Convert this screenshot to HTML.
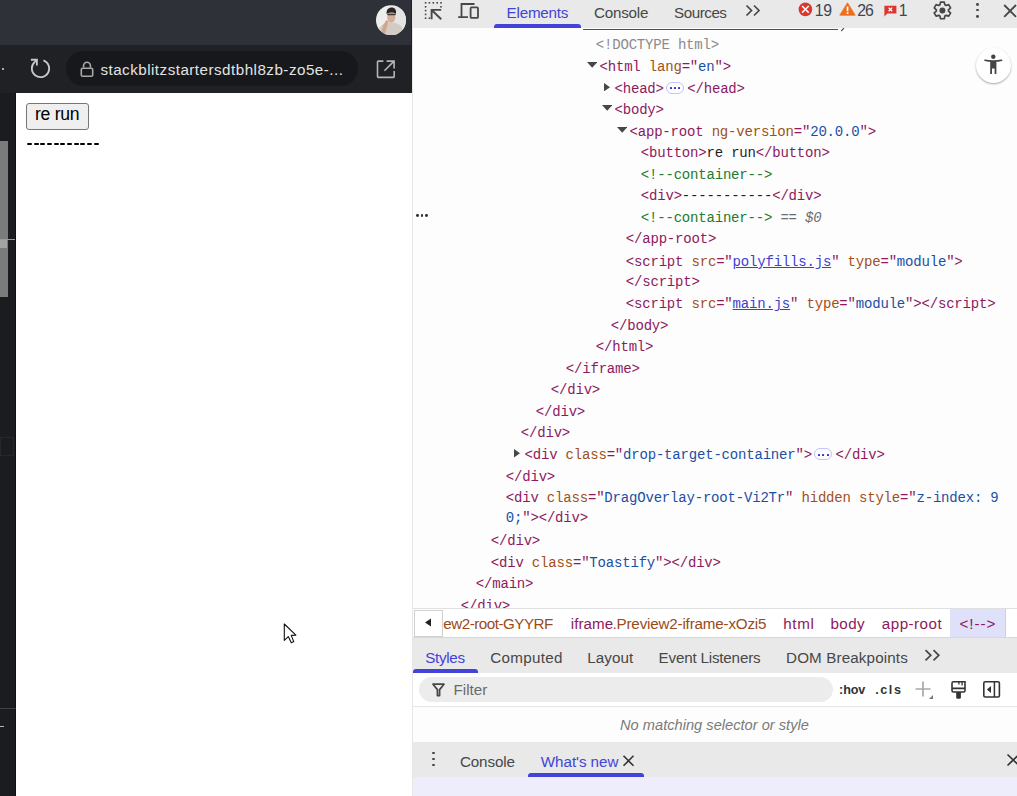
<!DOCTYPE html><html><head><meta charset="utf-8"><style>
html,body{margin:0;padding:0;width:1017px;height:796px;overflow:hidden;background:#fff;}
body{position:relative;font-family:"Liberation Sans", sans-serif;}
.r{position:absolute;}
.t{position:absolute;white-space:pre;}
.m{position:absolute;white-space:pre;font-family:"Liberation Mono", monospace;font-size:14px;line-height:14px;letter-spacing:-0.19px;}
.bd{display:inline-block;position:relative;width:18px;height:12px;margin:0 3.5px 0 2px;vertical-align:-1px;border:1px solid #c4c4f6;border-radius:6px;box-sizing:border-box;}
.bd i{position:absolute;top:4.6px;width:2px;height:2px;background:#3030d8;border-radius:0.5px;}
.bd i:nth-child(1){left:3.3px}.bd i:nth-child(2){left:7.5px}.bd i:nth-child(3){left:11.7px}
</style></head><body>
<div class="r" style="left:0px;top:0px;width:412px;height:45px;background:#2e3138;"></div>
<div class="r" style="left:0px;top:45px;width:412px;height:48px;background:#1f2125;"></div>
<div class="r" style="left:0px;top:93px;width:16px;height:703px;background:#1b1c20;"></div>
<div class="r" style="left:15px;top:93px;width:1px;height:703px;background:#0f1014;"></div>
<div class="r" style="left:16px;top:93px;width:396px;height:703px;background:#ffffff;"></div>
<div class="r" style="left:66.2px;top:51.1px;width:291.4px;height:34.7px;background:#17181b;border-radius:17.35px;"></div>
<div class="r" style="left:2.2px;top:67.7px;width:2px;height:2px;background:#d8d8d8;border-radius:1px;"></div>
<svg class="r" style="left:26px;top:54px" width="30" height="30" viewBox="0 0 30 30"><path d="M17.48 6.32 A8.7 8.7 0 1 1 8.6 8.1 L10.9 5.8" fill="none" stroke="#c8c8c8" stroke-width="1.8"/><path d="M4.9 5.75 H10.9 V11.5" fill="none" stroke="#c8c8c8" stroke-width="1.8"/></svg>
<svg class="r" style="left:79px;top:60px" width="16" height="18" viewBox="0 0 16 18"><path d="M4.6 7.6 V5.6 A3.4 3.4 0 0 1 11.4 5.6 V7.6" fill="none" stroke="#a9a9a9" stroke-width="1.6"/><rect x="2.3" y="8.2" width="11.4" height="8" rx="1.3" fill="none" stroke="#a9a9a9" stroke-width="1.6"/></svg>
<div class="t" style="left:100.42px;top:61.83px;font-size:15.2px;line-height:15.2px;color:#e3e3e3;letter-spacing:0.478px;">stackblitzstartersdtbhl8zb-zo5e-...</div>
<svg class="r" style="left:375px;top:59px" width="22" height="21" viewBox="0 0 22 21"><path d="M8.4 2.1 H3.3 Q2.5 2.1 2.5 2.9 V17.6 Q2.5 18.4 3.3 18.4 H18.4 Q19.2 18.4 19.2 17.6 V12" fill="none" stroke="#b4b4b4" stroke-width="1.6"/><path d="M11.6 2.1 H19.1 V9.6 M18.8 2.4 L9.4 11.8" fill="none" stroke="#b4b4b4" stroke-width="1.6"/></svg>
<svg class="r" style="left:375.8px;top:4.6px" width="30" height="30" viewBox="0 0 30 30"><defs><clipPath id="ac"><circle cx="15" cy="15.2" r="15"/></clipPath></defs>
<g clip-path="url(#ac)"><rect width="30" height="30" fill="#eeeeee"/><rect x="18" width="12" height="30" fill="#e4e4e4"/>
<path d="M1 31 C2 22 6 17.5 15 17.5 C23 17.5 27 21 28.5 31 Z" fill="#d4cbc4"/>
<ellipse cx="15.3" cy="12.2" rx="4" ry="5.6" fill="#d3b09c"/>
<path d="M10.6 9 C10.2 4.4 12.6 2.4 15.6 2.4 C19 2.4 20.6 4.8 20 9 C19 7 12.5 6.8 10.6 9 Z" fill="#2e2420"/>
<rect x="11.2" y="8.8" width="8.6" height="1.5" rx="0.7" fill="#3a3a3a"/>
<path d="M5.5 28 C6 22 8 18.5 10.5 15 L12.6 16 C11.6 20 10 25 9 29 Z" fill="#d2a68a"/>
</g></svg>
<div class="r" style="left:0px;top:141px;width:8px;height:156.4px;background:#7b7b7b;"></div>
<div class="r" style="left:0px;top:239px;width:15px;height:1px;background:#9a9a9a;"></div>
<div class="r" style="left:0px;top:240px;width:7px;height:8px;background:#a3a3a3;"></div>
<div class="r" style="left:0px;top:437px;width:14px;height:19px;background:transparent;border:1px solid #24272d;box-sizing:border-box;"></div>
<div class="r" style="left:0px;top:708px;width:15.5px;height:1.2px;background:#3d4048;"></div>
<div class="r" style="left:0px;top:725.6px;width:3.8px;height:1.6px;background:#b8b8c8;"></div>
<div class="r" style="left:26.2px;top:103px;width:62.5px;height:26.8px;background:#efefef;border:1px solid #767676;border-radius:3px;box-sizing:border-box;"></div>
<div class="t" style="left:35.06px;top:106.30px;font-size:17.6px;line-height:17.6px;color:#000;letter-spacing:-0.287px;">re run</div>
<div class="r" style="left:26.9px;top:142.7px;width:5.0px;height:1.9px;background:#000;border-radius:1px;"></div>
<div class="r" style="left:33.57px;top:142.7px;width:5.0px;height:1.9px;background:#000;border-radius:1px;"></div>
<div class="r" style="left:40.24px;top:142.7px;width:5.0px;height:1.9px;background:#000;border-radius:1px;"></div>
<div class="r" style="left:46.91px;top:142.7px;width:5.0px;height:1.9px;background:#000;border-radius:1px;"></div>
<div class="r" style="left:53.58px;top:142.7px;width:5.0px;height:1.9px;background:#000;border-radius:1px;"></div>
<div class="r" style="left:60.25px;top:142.7px;width:5.0px;height:1.9px;background:#000;border-radius:1px;"></div>
<div class="r" style="left:66.92px;top:142.7px;width:5.0px;height:1.9px;background:#000;border-radius:1px;"></div>
<div class="r" style="left:73.59px;top:142.7px;width:5.0px;height:1.9px;background:#000;border-radius:1px;"></div>
<div class="r" style="left:80.26px;top:142.7px;width:5.0px;height:1.9px;background:#000;border-radius:1px;"></div>
<div class="r" style="left:86.93px;top:142.7px;width:5.0px;height:1.9px;background:#000;border-radius:1px;"></div>
<div class="r" style="left:93.6px;top:142.7px;width:5.0px;height:1.9px;background:#000;border-radius:1px;"></div>
<svg class="r" style="left:280px;top:620px" width="22" height="26" viewBox="0 0 22 26"><path d="M4.3 4 L4.3 20.4 L8.3 16.6 L11.3 22.7 L13.8 21.6 L11.2 15.4 L15.9 15.1 Z" fill="#fff" stroke="#111" stroke-width="1.1" stroke-linejoin="round"/></svg>
<div class="r" style="left:411px;top:0px;width:1px;height:93px;background:#1e2026;"></div>
<div class="r" style="left:412px;top:0px;width:605px;height:796px;background:#fdfdfd;"></div>
<div class="r" style="left:412px;top:0px;width:1px;height:796px;background:#e6e6e6;"></div>
<div class="r" style="left:413px;top:0px;width:604px;height:27.7px;background:#e9e9e9;"></div>
<svg class="r" style="left:423px;top:1px" width="22" height="20" viewBox="0 0 22 20"><g fill="#474747"><rect x="1.8" y="1" width="1.6" height="1.6"/><rect x="5.6" y="1" width="1.6" height="1.6"/><rect x="9.5" y="1" width="1.6" height="1.6"/><rect x="13.4" y="1" width="1.6" height="1.6"/><rect x="17.2" y="1" width="1.6" height="1.6"/><rect x="1.8" y="5" width="1.6" height="1.6"/><rect x="1.8" y="8.8" width="1.6" height="1.6"/><rect x="1.8" y="12.6" width="1.6" height="1.6"/><rect x="1.8" y="16.4" width="1.6" height="1.6"/><rect x="17.2" y="5" width="1.6" height="1.6"/><rect x="5.6" y="16.4" width="1.6" height="1.6"/></g><path d="M8.6 18.2 V8.9 H18.2 M9.2 9.5 L18.2 18.2" fill="none" stroke="#474747" stroke-width="1.9"/></svg>
<svg class="r" style="left:457px;top:2px" width="24" height="18" viewBox="0 0 24 18"><path d="M4.5 14.8 V2 H17.5 M1.2 15.2 H11" fill="none" stroke="#474747" stroke-width="1.8"/><rect x="13.6" y="5.4" width="7.4" height="10.5" rx="1" fill="none" stroke="#474747" stroke-width="1.8"/></svg>
<div class="t" style="left:506.58px;top:5.23px;font-size:15.2px;line-height:15.2px;color:#4343d8;letter-spacing:-0.205px;">Elements</div>
<div class="r" style="left:494.2px;top:24px;width:87.3px;height:3.7px;background:#4343d8;border-radius:3px 3px 0 0;"></div>
<div class="t" style="left:593.94px;top:5.23px;font-size:15.2px;line-height:15.2px;color:#474747;letter-spacing:-0.219px;">Console</div>
<div class="t" style="left:674.12px;top:5.23px;font-size:15.2px;line-height:15.2px;color:#474747;letter-spacing:-0.478px;">Sources</div>
<svg class="r" style="left:745px;top:4px" width="17" height="13" viewBox="0 0 17 13"><path d="M1.5 1.5 L6.5 6.5 L1.5 11.5 M9 1.5 L14 6.5 L9 11.5" fill="none" stroke="#474747" stroke-width="1.7"/></svg>
<svg class="r" style="left:798px;top:2px" width="15" height="15" viewBox="0 0 15 15"><circle cx="7.4" cy="7.35" r="6.8" fill="#dc362e"/><path d="M4.1 4.05 L10.7 10.65 M10.7 4.05 L4.1 10.65" stroke="#fff" stroke-width="1.5"/></svg>
<div class="t" style="left:814.82px;top:2.83px;font-size:15.8px;line-height:15.8px;color:#3f4655;letter-spacing:-0.342px;">19</div>
<svg class="r" style="left:839px;top:2.4px" width="17" height="14" viewBox="0 0 17 14"><path d="M8.5 0.8 L16.2 13.2 H0.8 Z" fill="#ed6f1e" stroke="#ed6f1e" stroke-width="0.8" stroke-linejoin="round"/><rect x="7.7" y="4.6" width="1.7" height="4.6" fill="#fff"/><rect x="7.7" y="10.2" width="1.7" height="1.7" fill="#fff"/></svg>
<div class="t" style="left:857.21px;top:2.83px;font-size:15.8px;line-height:15.8px;color:#3f4655;letter-spacing:-0.916px;">26</div>
<svg class="r" style="left:884px;top:5px" width="13" height="12" viewBox="0 0 13 12"><path d="M0.4 0.8 H12.4 V8.6 H3.4 L0.4 11.4 Z" fill="#dc362e"/><path d="M4.6 2.6 L8.2 6.2 M8.2 2.6 L4.6 6.2" stroke="#fff" stroke-width="1.3"/></svg>
<div class="t" style="left:898.82px;top:2.83px;font-size:15.8px;line-height:15.8px;color:#3f4655;">1</div>
<svg class="r" style="left:932px;top:0px" width="21" height="21" viewBox="0 0 21 21"><path d="M7.92 4.83 L8.55 2.05 L12.25 2.05 L12.88 4.83 L13.99 5.46 L16.70 4.62 L18.55 7.83 L16.47 9.76 L16.47 11.04 L18.55 12.97 L16.70 16.18 L13.99 15.34 L12.88 15.97 L12.25 18.75 L8.55 18.75 L7.92 15.97 L6.81 15.34 L4.10 16.18 L2.25 12.97 L4.33 11.04 L4.33 9.76 L2.25 7.83 L4.10 4.62 L6.81 5.46 Z" fill="none" stroke="#474747" stroke-width="1.7" stroke-linejoin="round"/><circle cx="10.4" cy="10.4" r="3" fill="#474747"/></svg>
<div class="r" style="left:976.2px;top:2.9000000000000004px;width:2.8px;height:2.8px;background:#474747;border-radius:50%;"></div>
<div class="r" style="left:976.2px;top:8.5px;width:2.8px;height:2.8px;background:#474747;border-radius:50%;"></div>
<div class="r" style="left:976.2px;top:15.0px;width:2.8px;height:2.8px;background:#474747;border-radius:50%;"></div>
<svg class="r" style="left:1003px;top:4px" width="14" height="14" viewBox="0 0 14 14"><path d="M1.2 1 L13 12.8 M13 1 L1.2 12.8" stroke="#474747" stroke-width="1.8"/></svg>
<div class="r" style="left:583px;top:28.5px;width:255.3px;height:1.2px;background:#4040d0;"></div>
<svg class="r" style="left:840px;top:27.5px" width="5" height="4" viewBox="0 0 5 4"><path d="M4 0 L1.2 3" stroke="#555" stroke-width="1.1"/></svg>
<div class="r" style="left:413px;top:28px;width:604px;height:580px;overflow:hidden;">
<div class="m" style="left:182.80px;top:10.47px;"><span style="color:#8a8a8a">&lt;!DOCTYPE html&gt;</span></div>
<div class="m" style="left:186.50px;top:32.02px;"><span style="color:#8c1a5d">&lt;html </span><span style="color:#a0501a">lang</span><span style="color:#8c1a5d">="</span><span style="color:#1a4fa6">en</span><span style="color:#8c1a5d">"&gt;</span></div>
<svg class="r" style="left:173.70px;top:34.15px" width="10.4" height="5.8" viewBox="0 0 10.4 5.8"><path d="M0 0 H10.4 L5.2 5.8 Z" fill="#474747"/></svg>
<div class="m" style="left:201.50px;top:53.57px;"><span style="color:#8c1a5d">&lt;head&gt;</span><span class="bd"><i></i><i></i><i></i></span><span style="color:#8c1a5d">&lt;/head&gt;</span></div>
<svg class="r" style="left:190.70px;top:55.00px" width="6" height="8.4" viewBox="0 0 6 8.4"><path d="M0 0 V8.4 L6 4.2 Z" fill="#474747"/></svg>
<div class="m" style="left:201.50px;top:75.12px;"><span style="color:#8c1a5d">&lt;body&gt;</span></div>
<svg class="r" style="left:188.70px;top:77.25px" width="10.4" height="5.8" viewBox="0 0 10.4 5.8"><path d="M0 0 H10.4 L5.2 5.8 Z" fill="#474747"/></svg>
<div class="m" style="left:216.50px;top:96.67px;"><span style="color:#8c1a5d">&lt;app-root </span><span style="color:#a0501a">ng-version</span><span style="color:#8c1a5d">="</span><span style="color:#1a4fa6">20.0.0</span><span style="color:#8c1a5d">"&gt;</span></div>
<svg class="r" style="left:203.70px;top:98.80px" width="10.4" height="5.8" viewBox="0 0 10.4 5.8"><path d="M0 0 H10.4 L5.2 5.8 Z" fill="#474747"/></svg>
<div class="m" style="left:227.80px;top:118.22px;"><span style="color:#8c1a5d">&lt;button&gt;</span><span style="color:#1f1f1f">re run</span><span style="color:#8c1a5d">&lt;/button&gt;</span></div>
<div class="m" style="left:227.80px;top:139.77px;"><span style="color:#237a2e">&lt;!--container--&gt;</span></div>
<div class="m" style="left:227.80px;top:161.32px;"><span style="color:#8c1a5d">&lt;div&gt;</span><span style="color:#1f1f1f">-----------</span><span style="color:#8c1a5d">&lt;/div&gt;</span></div>
<div class="m" style="left:227.80px;top:182.87px;"><span style="color:#237a2e">&lt;!--container--&gt;</span><span style="color:#6e6e6e"> == </span><span style="color:#6e6e6e;font-style:italic;">$0</span></div>
<div class="m" style="left:212.80px;top:204.42px;"><span style="color:#8c1a5d">&lt;/app-root&gt;</span></div>
<div class="m" style="left:212.80px;top:226.97px;"><span style="color:#8c1a5d">&lt;script </span><span style="color:#a0501a">src</span><span style="color:#8c1a5d">="</span><span style="color:#4040d0;text-decoration:underline;">polyfills.js</span><span style="color:#8c1a5d">" </span><span style="color:#a0501a">type</span><span style="color:#8c1a5d">="</span><span style="color:#1a4fa6">module</span><span style="color:#8c1a5d">"&gt;</span></div>
<div class="m" style="left:212.80px;top:246.72px;"><span style="color:#8c1a5d">&lt;/script&gt;</span></div>
<div class="m" style="left:212.80px;top:269.07px;"><span style="color:#8c1a5d">&lt;script </span><span style="color:#a0501a">src</span><span style="color:#8c1a5d">="</span><span style="color:#4040d0;text-decoration:underline;">main.js</span><span style="color:#8c1a5d">" </span><span style="color:#a0501a">type</span><span style="color:#8c1a5d">="</span><span style="color:#1a4fa6">module</span><span style="color:#8c1a5d">"&gt;</span><span style="color:#8c1a5d">&lt;/script&gt;</span></div>
<div class="m" style="left:197.80px;top:290.62px;"><span style="color:#8c1a5d">&lt;/body&gt;</span></div>
<div class="m" style="left:182.80px;top:312.17px;"><span style="color:#8c1a5d">&lt;/html&gt;</span></div>
<div class="m" style="left:152.80px;top:333.72px;"><span style="color:#8c1a5d">&lt;/iframe&gt;</span></div>
<div class="m" style="left:137.80px;top:355.27px;"><span style="color:#8c1a5d">&lt;/div&gt;</span></div>
<div class="m" style="left:122.80px;top:376.82px;"><span style="color:#8c1a5d">&lt;/div&gt;</span></div>
<div class="m" style="left:107.80px;top:398.37px;"><span style="color:#8c1a5d">&lt;/div&gt;</span></div>
<div class="m" style="left:111.50px;top:419.92px;"><span style="color:#8c1a5d">&lt;div </span><span style="color:#a0501a">class</span><span style="color:#8c1a5d">="</span><span style="color:#1a4fa6">drop-target-container</span><span style="color:#8c1a5d">"&gt;</span><span class="bd"><i></i><i></i><i></i></span><span style="color:#8c1a5d">&lt;/div&gt;</span></div>
<svg class="r" style="left:100.70px;top:421.35px" width="6" height="8.4" viewBox="0 0 6 8.4"><path d="M0 0 V8.4 L6 4.2 Z" fill="#474747"/></svg>
<div class="m" style="left:92.80px;top:442.27px;"><span style="color:#8c1a5d">&lt;/div&gt;</span></div>
<div class="m" style="left:92.80px;top:463.02px;"><span style="color:#8c1a5d">&lt;div </span><span style="color:#a0501a">class</span><span style="color:#8c1a5d">="</span><span style="color:#1a4fa6">DragOverlay-root-Vi2Tr</span><span style="color:#8c1a5d">" </span><span style="color:#a0501a">hidden</span><span style="color:#8c1a5d"> </span><span style="color:#a0501a">style</span><span style="color:#8c1a5d">="</span><span style="color:#1a4fa6">z-index: 9</span></div>
<div class="m" style="left:92.80px;top:483.37px;"><span style="color:#1a4fa6">0;</span><span style="color:#8c1a5d">"&gt;</span><span style="color:#8c1a5d">&lt;/div&gt;</span></div>
<div class="m" style="left:77.80px;top:506.12px;"><span style="color:#8c1a5d">&lt;/div&gt;</span></div>
<div class="m" style="left:77.80px;top:527.67px;"><span style="color:#8c1a5d">&lt;div </span><span style="color:#a0501a">class</span><span style="color:#8c1a5d">="</span><span style="color:#1a4fa6">Toastify</span><span style="color:#8c1a5d">"&gt;</span><span style="color:#8c1a5d">&lt;/div&gt;</span></div>
<div class="m" style="left:62.80px;top:549.22px;"><span style="color:#8c1a5d">&lt;/main&gt;</span></div>
<div class="m" style="left:47.80px;top:570.77px;"><span style="color:#8c1a5d">&lt;/div&gt;</span></div>
</div>
<div class="r" style="left:416.0px;top:214.4px;width:2.8px;height:2.8px;background:#303030;border-radius:50%;"></div>
<div class="r" style="left:420.5px;top:214.4px;width:2.8px;height:2.8px;background:#303030;border-radius:50%;"></div>
<div class="r" style="left:425.1px;top:214.4px;width:2.8px;height:2.8px;background:#303030;border-radius:50%;"></div>
<div class="r" style="left:975.7px;top:48.3px;width:35.2px;height:35.2px;border-radius:50%;background:#fff;box-shadow:0 1px 2px rgba(0,0,0,0.35);"></div>
<svg class="r" style="left:983px;top:53px" width="22" height="24" viewBox="0 0 22 24"><circle cx="10.3" cy="3.7" r="2.2" fill="#444"/><path d="M2 7.2 C6 8.3 14.6 8.3 18.6 7.2" stroke="#444" stroke-width="1.6" fill="none" stroke-linecap="round"/><path d="M7.2 8 H13.4 V20.9 H11.6 V15.5 H9 V20.9 H7.2 Z" fill="#444"/></svg>
<div class="r" style="left:413px;top:608px;width:604px;height:30px;background:#ffffff;"></div>
<div class="r" style="left:413px;top:607.8px;width:604px;height:1px;background:#e0e0e0;"></div>
<div class="r" style="left:413px;top:637.3px;width:604px;height:1px;background:#d8d8d8;"></div>
<div class="r" style="left:413.5px;top:610px;width:29px;height:27px;border:1px solid #d0d0d0;box-sizing:border-box;background:#fff;"></div>
<svg class="r" style="left:424px;top:618px" width="8" height="9" viewBox="0 0 8 9"><path d="M7 0.5 V8.5 L1 4.5 Z" fill="#222"/></svg>
<div class="t" style="left:443.29px;top:616.33px;font-size:15.2px;line-height:15.2px;color:#9a4a18;letter-spacing:-0.490px;">ew2-root-GYYRF</div>
<div class="t" style="left:570.81px;top:616.33px;font-size:15.2px;line-height:15.2px;color:#8c1a5d;letter-spacing:0.023px;">iframe</div>
<div class="t" style="left:612.53px;top:616.33px;font-size:15.2px;line-height:15.2px;color:#9a4a18;letter-spacing:-0.183px;">.Preview2-iframe-xOzi5</div>
<div class="t" style="left:783.14px;top:616.33px;font-size:15.2px;line-height:15.2px;color:#8c1a5d;letter-spacing:0.667px;">html</div>
<div class="t" style="left:830.51px;top:616.33px;font-size:15.2px;line-height:15.2px;color:#8c1a5d;letter-spacing:0.368px;">body</div>
<div class="t" style="left:881.79px;top:616.33px;font-size:15.2px;line-height:15.2px;color:#8c1a5d;letter-spacing:0.477px;">app-root</div>
<div class="r" style="left:950px;top:608.7px;width:55px;height:28.7px;background:#dfe0fa;"></div>
<div class="t" style="left:959.54px;top:616.33px;font-size:15.2px;line-height:15.2px;color:#8c1a5d;letter-spacing:0.918px;">&lt;!--&gt;</div>
<div class="r" style="left:1005px;top:608.7px;width:1px;height:28.7px;background:#d0d0d0;"></div>
<div class="r" style="left:413px;top:638px;width:604px;height:34.8px;background:#e9e9e9;"></div>
<div class="t" style="left:425.22px;top:650.13px;font-size:15.2px;line-height:15.2px;color:#4343d8;letter-spacing:-0.321px;">Styles</div>
<div class="r" style="left:413px;top:669px;width:64.8px;height:3.8px;background:#4343d8;border-radius:3px 3px 0 0;"></div>
<div class="t" style="left:490.24px;top:650.13px;font-size:15.2px;line-height:15.2px;color:#474747;letter-spacing:0.303px;">Computed</div>
<div class="t" style="left:587.18px;top:650.13px;font-size:15.2px;line-height:15.2px;color:#474747;letter-spacing:0.098px;">Layout</div>
<div class="t" style="left:658.58px;top:650.13px;font-size:15.2px;line-height:15.2px;color:#474747;letter-spacing:-0.190px;">Event Listeners</div>
<div class="t" style="left:786.08px;top:650.13px;font-size:15.2px;line-height:15.2px;color:#474747;letter-spacing:0.130px;">DOM Breakpoints</div>
<svg class="r" style="left:924px;top:649px" width="18" height="14" viewBox="0 0 18 14"><path d="M1.5 1.2 L6.8 6.3 L1.5 11.4 M9.5 1.2 L14.8 6.3 L9.5 11.4" fill="none" stroke="#474747" stroke-width="1.7"/></svg>
<div class="r" style="left:413px;top:672.8px;width:604px;height:33px;background:#ffffff;"></div>
<div class="r" style="left:413px;top:705.5px;width:604px;height:1px;background:#e4e4e4;"></div>
<div class="r" style="left:418.5px;top:677.2px;width:414px;height:25.1px;background:#ececec;border-radius:12.5px;"></div>
<svg class="r" style="left:432px;top:683px" width="13" height="14" viewBox="0 0 13 14"><path d="M1 1.2 H12 L7.6 6.6 V12.6 H5.4 V6.6 Z" fill="none" stroke="#474747" stroke-width="1.7" stroke-linejoin="round"/></svg>
<div class="t" style="left:453.58px;top:681.93px;font-size:15.2px;line-height:15.2px;color:#6a6a6a;letter-spacing:0.005px;">Filter</div>
<div class="t" style="left:839.10px;top:684.13px;font-size:12.6px;line-height:12.6px;color:#333;font-family:'Liberation Sans', sans-serif;font-weight:bold;letter-spacing:-0.142px;">:hov</div>
<div class="t" style="left:875.18px;top:684.13px;font-size:12.6px;line-height:12.6px;color:#333;font-family:'Liberation Sans', sans-serif;font-weight:bold;letter-spacing:1.581px;">.cls</div>
<svg class="r" style="left:914px;top:680px" width="20" height="20" viewBox="0 0 20 20"><path d="M9 1.5 V16.5 M1.5 9 H16.5" stroke="#a8a8a8" stroke-width="1.7"/><path d="M19 15 V19 H15 Z" fill="#777"/></svg>
<svg class="r" style="left:950px;top:680px" width="17" height="20" viewBox="0 0 17 20"><path d="M3.5 1.8 H15 V10.5 Q15 12 13.5 12 H3.5 Q2 12 2 10.5 V3.3 Q2 1.8 3.5 1.8 Z M2 8.4 H15" fill="none" stroke="#333" stroke-width="1.6"/><path d="M8.9 1.8 V4.6 M12.1 1.8 V5.6" stroke="#333" stroke-width="1.3"/><path d="M6.2 12 H10.9 V17.2 Q10.9 18.7 9.4 18.7 H7.7 Q6.2 18.7 6.2 17.2 Z" fill="#333"/></svg>
<svg class="r" style="left:982px;top:680px" width="20" height="19" viewBox="0 0 20 19"><rect x="1.8" y="1.8" width="15.6" height="15.2" rx="1.5" fill="none" stroke="#333" stroke-width="1.6"/><path d="M12.4 1.8 V17" stroke="#333" stroke-width="1.5"/><path d="M9 6 V12.9 L4.9 9.45 Z" fill="#333"/></svg>
<div class="t" style="left:620.06px;top:717.64px;font-size:14.6px;line-height:14.6px;color:#7a7a7a;font-family:'Liberation Sans', sans-serif;font-style:italic;letter-spacing:0.024px;">No matching selector or style</div>
<div class="r" style="left:413px;top:742px;width:604px;height:34.8px;background:#e9e9e9;"></div>
<div class="r" style="left:413px;top:776.8px;width:604px;height:19.2px;background:#eeedfc;"></div>
<div class="r" style="left:431.8px;top:751.7px;width:2.8px;height:2.8px;background:#474747;border-radius:50%;"></div>
<div class="r" style="left:431.8px;top:757.7px;width:2.8px;height:2.8px;background:#474747;border-radius:50%;"></div>
<div class="r" style="left:431.8px;top:763.7px;width:2.8px;height:2.8px;background:#474747;border-radius:50%;"></div>
<div class="t" style="left:459.94px;top:754.13px;font-size:15.2px;line-height:15.2px;color:#474747;letter-spacing:-0.119px;">Console</div>
<div class="t" style="left:540.82px;top:754.13px;font-size:15.2px;line-height:15.2px;color:#4343d8;letter-spacing:-0.050px;">What's new</div>
<svg class="r" style="left:622px;top:755px" width="13" height="12" viewBox="0 0 13 12"><path d="M1.5 0.8 L11.5 10.8 M11.5 0.8 L1.5 10.8" stroke="#333" stroke-width="1.6"/></svg>
<div class="r" style="left:527.9px;top:773px;width:116px;height:3.8px;background:#4343d8;border-radius:3px 3px 0 0;"></div>
<svg class="r" style="left:1006px;top:753px" width="12" height="14" viewBox="0 0 12 14"><path d="M1.5 1.5 L13 12.5 M13 1.5 L1.5 12.5" stroke="#333" stroke-width="1.7"/></svg>
</body></html>
